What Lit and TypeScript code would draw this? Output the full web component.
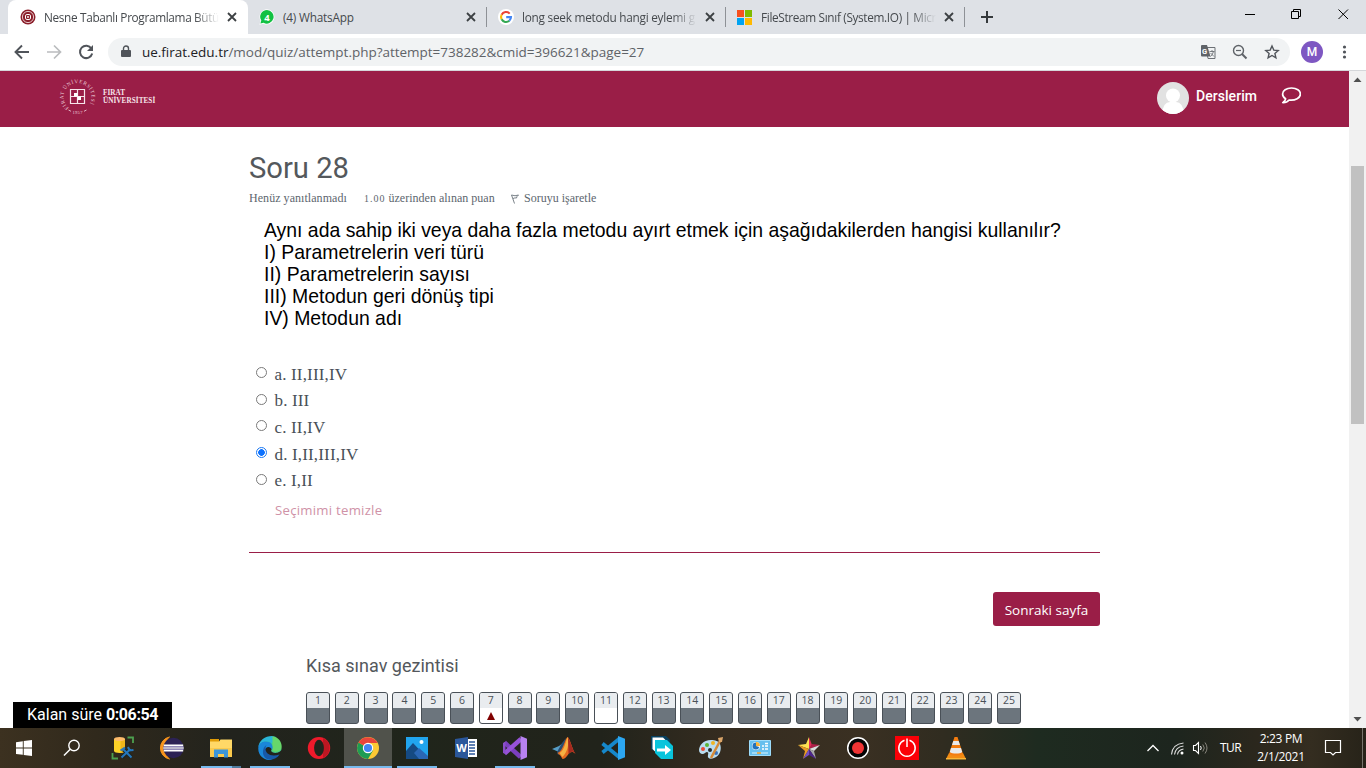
import { LitElement, html, svg, css } from "lit";
import { customElement } from "lit/decorators.js";
import { classMap } from "lit/directives/class-map.js";

const closeX = html`<svg class="x" width="10" height="10" viewBox="0 0 10 10"><path d="M1 1l8 8M9 1l-8 8" stroke="#3c4043" stroke-width="1.8" /></svg>`;

const tabIcons = {
  firat: html`<svg width="16" height="16" viewBox="0 0 16 16"><circle cx="8" cy="8" r="7.500" fill="#8b1f2b" /><circle cx="8" cy="8" r="5.600" fill="none" stroke="#e5c4c7" stroke-width="1" /><circle cx="8" cy="8" r="4" fill="none" stroke="#8b1f2b" /><rect x="5.500" y="5.500" width="5" height="5" rx="1.400" fill="none" stroke="#fff" stroke-width="1" /><path d="M8 7v2M7 8h2" stroke="#fff" stroke-width=".9" /></svg>`,
  whatsapp: html`<svg width="16" height="16" viewBox="0 0 16 16"><path d="M8 .3a7.6 7.6 0 1 1-3.6 14.4L.4 15.8l1.2-4A7.6 7.6 0 0 1 8 .3z" fill="#fff" /><path d="M8 1a6.8 6.8 0 1 1-3.4 12.8L1.4 14.6l.9-3.1A6.8 6.8 0 0 1 8 1z" fill="#12c143" /><text x="7.900" y="11.500" font-family="Open Sans, sans-serif" font-weight="700" font-size="9.500" text-anchor="middle" fill="#fff">4</text></svg>`,
  google: html`<svg width="16" height="16" viewBox="0 0 16 16"><circle cx="8" cy="8" r="8" fill="#fff" /><g fill="none" stroke-width="2.1"><path d="M11.7 4.6A5 5 0 0 0 3.6 5.7" stroke="#ea4335" /><path d="M3.6 5.7a5 5 0 0 0 0 4.6" stroke="#fbbc05" /><path d="M3.6 10.3a5 5 0 0 0 7.7 1.5" stroke="#34a853" /><path d="M11.3 11.8A5 5 0 0 0 13 8.1H8.2" stroke="#4285f4" /></g></svg>`,
  microsoft: html`<svg width="16" height="16" viewBox="0 0 16 16"><path d="M0 1h7v7h-7z" fill="#f7501e" /><path d="M8 1h7v7h-7z" fill="#7fba00" /><path d="M0 9h7v7h-7z" fill="#00a3f1" /><path d="M8 9h7v7h-7z" fill="#ffb900" /></svg>`,
};

const appIcons: Record<string, unknown> = {
  sql: svg`<path d="M16.500 1.500H22V7M1.500 17v5.500H7" fill="none" stroke="#4da04f" stroke-width="1.800"/><path d="M3 3v12c0 2.600 11 2.600 11 0V3z" fill="#fcd227"/><path d="M9.500 4H14v12l-4.500.900z" fill="#eeb51b"/><ellipse cx="8.500" cy="3" rx="5.500" ry="2" fill="#fdbb6b"/><path d="M11 21.500l9-8.500M12.500 13.500l8 8" stroke="#1f2520" stroke-width="4"/><path d="M10.500 21.500l9-8.500M12.500 13.500l8 8M9.500 14.500l4.500-3M17 11l1.500 3.500 4-.5" stroke="#2477bd" stroke-width="2" fill="none"/>`,
  eclipse: svg`<path d="M9.500 1A11.200 11.200 0 0 0 9.500 23 14 14 0 0 1 9.500 1z" fill="#f7941e" stroke="#f7941e" stroke-width="1"/><circle cx="13.500" cy="12" r="10.200" fill="#2c2255"/><path d="M3.800 9.200h19.400M3.300 12h20.400M3.800 14.800h19.400" stroke="#fff" stroke-width="1.500"/><path d="M3.500 10.600h20M3.500 13.400h20" stroke="#9188b8" stroke-width="1.200"/>`,
  explorer: svg`<path d="M1 3h9v4H1z" fill="#e09c07"/><path d="M1 5.500h9l1.500-2H23V21H1z" fill="#ffd867"/><path d="M1 12h22v9H1z" fill="#fbca4d"/><path d="M5 21.500v-8h14v8h-4V18H9v3.500z" fill="#3d96d8"/>`,
  edge: svg`<path d="M23.500 13A12 12 0 0 0 .5 9.500C3 4.500 13 5 14 11c.4 2.500-1.500 3-.5 4.600C15.500 18 23 17 23.500 13z" fill="#43c98a"/><path d="M14 0C7 0 1 4.500.4 11c3-6 10-7 13.500-3.500L18 1z" fill="#2ab6d8"/><path d="M14.500.3c6 .7 9.500 6 9.200 10.700-.2 4-5.700 6-9.200 4z" fill="#66d76a"/><path d="M.4 11C1 7 5 5.500 8 5.500c6 0 7.500 5 6 8.500-1-3-4-4-6-2-4 5 2 11 7 10.800C9 26.500-1 21 .4 11z" fill="#1a87d9"/><path d="M8.500 9C5 15 10.500 22 21.500 18.500c-3 5-10 6.500-14 3.500C3.500 19 4.500 11 8.500 9z" fill="#1759a8"/>`,
  opera: svg`<ellipse cx="12" cy="12" rx="11.200" ry="11" fill="#ef1a2b"/><path d="M16 2a11.200 11 0 0 1 0 20z" fill="#bd1722"/><ellipse cx="12" cy="12" rx="4.900" ry="8.200" fill="#22251d"/>`,
  chrome: svg`<circle cx="12" cy="12" r="11" fill="#fcc934"/><path d="M12 12L2.500 6.500A11 11 0 0 0 12 23l5-8.500z" fill="#1e9b54"/><path d="M12 12L2.500 6.500A11 11 0 0 1 21.600 7H12z" fill="#e8453c"/><circle cx="12" cy="12" r="5.200" fill="#fff"/><circle cx="12" cy="12" r="4.100" fill="#4285f4"/>`,
  photos: svg`<path d="M1 1h22v22H1z" fill="#21a5ee"/><path d="M1 15l7-8 15 16H1z" fill="#154a82"/><path d="M9 17l5-5 9 8v3H14z" fill="#2a67b5"/><circle cx="16.500" cy="6" r="2" fill="#fff"/>`,
  word: svg`<path d="M12 3h11v18H12z" fill="#fff"/><path d="M15 6h6M15 9h6M15 12h6M15 15h6M15 18h6" stroke="#2b579a" stroke-width="1.300"/><path d="M1 3l13-2v22L1 21z" fill="#2b579a"/><text x="7.500" y="16" font-family="Open Sans,sans-serif" font-size="11" font-weight="700" text-anchor="middle" fill="#fff">W</text>`,
  vs: svg`<path d="M1.500 6.500L17.500 21" stroke="#7b3fc0" stroke-width="4.500"/><path d="M1.500 17.500L18 3" stroke="#9652d8" stroke-width="4.500"/><path d="M0 7l2.500-1.500V18L0 17z" fill="#8b4fcb"/><path d="M17.500 0v24L24 21.300V2.700z" fill="#b782f1"/>`,
  matlab: svg`<path d="M0 13l7-3 4-3-4 9z" fill="#569dc6"/><path d="M5 16l5-9 4-5-4 14-4 3z" fill="#294c70"/><path d="M15.500 1c3 2 4 11 8 17-3-3-5-2-7 0-2 3-4 5-6 5-2-4-3-4-5-6 6-2 7-14 10-16z" fill="#e56b20"/><path d="M15.500 1c2 7 0 15-5 20l-3-4c5-3 6-11 8-16z" fill="#f5b243"/><path d="M16 1c3 5 4 12 7.500 17-3-4-5-2-7 0z" fill="#a42920"/>`,
  vscode: svg`<path d="M1.500 7.500L18 21M1.500 16.500L18 3" stroke="#1688cb" stroke-width="3.600"/><path d="M17 0l7 2.800v18.400L17 24z" fill="#2ca7f2"/>`,
  transfer: svg`<path d="M1 0h15l4 4v11H4L1 13z" fill="#08405f"/><path d="M2.500 1.500H13l4 4H6v11l-3.500-3.500z" fill="#fff"/><path d="M5 4h12l6 6v13H11l-6-6z" fill="#08c4dc"/><path d="M7 14h10" stroke="#fff" stroke-width="3"/><path d="M15 9l6 5-6 5z" fill="#fff"/>`,
  paint: svg`<path d="M12 4C4 4 0 10 0 14s4 5 6 3 4-1 3 2 2 5 6 3c6-2 8-9 6-14-1-3-5-4-9-4z" fill="#b9dcf0"/><circle cx="4" cy="13" r="2" fill="#e94a35"/><circle cx="8" cy="9" r="2" fill="#5cb436"/><circle cx="14" cy="7" r="2" fill="#efb424"/><circle cx="11" cy="14" r="2" fill="#252a2c"/><circle cx="17" cy="17" r="2" fill="#3972bd"/><path d="M12 22L21 5" stroke="#d58a38" stroke-width="2.500"/><path d="M20 6l-1-4 5-1-1 5z" fill="#dba66a"/>`,
  panel: svg`<path d="M1.500 4.500h21v15h-21z" fill="#66bfee" stroke="#9ddcfb"/><circle cx="8" cy="10" r="4" fill="#fff"/><path d="M8 10V6.500a3.500 3.500 0 1 0 3.300 4.500z" fill="#2272bb"/><path d="M8 10V6a4 4 0 0 1 4 4z" fill="#f6b33b"/><path d="M14 10h2M14 13h2M17 7.500h3M17 10h3M17 13h3" stroke="#fff" stroke-width="1.400"/><path d="M4 17h16" stroke="#d9f3fe"/><path d="M9 17h4" stroke="#e79e30" stroke-width="1.500"/>`,
  star: svg`<path d="M12 1l-3 7-8 1 11 4z" fill="#fee253"/><path d="M1 9l7 6-2 8 6-10z" fill="#e99b25"/><path d="M12 1l3 8-3 4z" fill="#e12d59"/><path d="M15 8l8 1-11 4z" fill="#b01e49"/><path d="M23 9l-6 6-5-2z" fill="#ddd"/><path d="M17 15l2 8-7-10z" fill="#a6a6a8"/><path d="M6 23l6-10v6z" fill="#7550c0"/><path d="M12 13l7 10-7-4z" fill="#4c258b"/>`,
  record: svg`<circle cx="12" cy="12" r="10.300" fill="#050505" stroke="#fff" stroke-width="1.500"/><circle cx="12" cy="12" r="6" fill="#ef3434"/>`,
  power: svg`<path d="M0 0h24v24H0z" fill="#fb0007"/><path d="M9.500 4.300a8.200 8.200 0 1 0 5 0M12 2.500V11" stroke="#fff" stroke-width="1.500" fill="none"/>`,
  vlc: svg`<path d="M5 17h14l3 6H2z" fill="#f28b13"/><path d="M10.500 1h3L19 18c-2 2-12 2-14 0z" fill="#f47c0f"/><path d="M9.300 5h5.400l1.300 4H8zM7 12h10l1.200 4c-2 2-10 2-12.400 0z" fill="#e9e9e9"/><path d="M2 22h20v1.500H2z" fill="#f9b536"/>`,
};

const apps = [
  ["sql", ""], ["eclipse", ""], ["explorer", "open split"], ["edge", "open"], ["opera", ""], ["chrome", "focus"],
  ["photos", "open"], ["word", ""], ["vs", "open"], ["matlab", ""], ["vscode", ""], ["transfer", ""],
  ["paint", ""], ["panel", ""], ["star", ""], ["record", ""], ["power", ""], ["vlc", ""],
];

@customElement("browser-chrome")
class BrowserChrome extends LitElement {
  static styles = css`
    :host { display: block; height: 71px; font-family: "Open Sans", sans-serif; box-sizing: border-box; border-bottom: 1px solid #d5d7da; background: #fff; }
    svg { display: block; flex: none; }
    .tabs { height: 34px; background: #dee1e6; display: flex; padding-left: 8px; box-sizing: border-box; }
    .tab { display: flex; align-items: center; box-sizing: border-box; height: 34px; width: 238px; padding: 0 10px 0 11px; }
    .active { background: #fff; border-radius: 8px 8px 0 0; width: 240px; padding: 0 11px 0 12px; }
    .title { flex: 1; min-width: 0; margin: 0 8px; white-space: nowrap; font-size: 11.8px; letter-spacing: -0.240px; color: #45494d; line-height: 20px; mask-image: linear-gradient(90deg, #000 86%, transparent); }
    .tight { letter-spacing: -0.340px; }
    .plain { mask-image: none; letter-spacing: -0.200px; }
    .sep { width: 1px; height: 20px; background: #8e9196; margin-top: 7px; }
    .plus { margin: 11px 0 0 16px; }
    .win { margin-left: auto; display: flex; gap: 36px; margin-right: 17px; padding-top: 9px; }
    .bar { height: 36px; display: flex; align-items: center; padding: 0 14px; }
    .nav { display: flex; gap: 16px; margin-right: 14px; }
    .omni { flex: none; width: 1182px; height: 28px; border-radius: 14px; background: #f1f3f4; display: flex; align-items: center; box-sizing: border-box; padding: 0 10px 0 12px; }
    .url { font-size: 13.5px; line-height: 18px; margin: 0 0 1px 10px; color: #5f6368; white-space: nowrap; letter-spacing: -0.020px; }
    .host { color: #202124; }
    .actions { margin-left: auto; display: flex; gap: 16px; }
    .me { width: 22px; height: 22px; border-radius: 50%; background: #7e57c2; color: #fff; display: grid; place-items: center; font: 500 12px Roboto, sans-serif; margin: 0 17px 0 11px; flex: none; }
  `;
  render() {
    return html`
      <div class="tabs">
        <div class="tab active">${tabIcons.firat}<span class="title tight">Nesne Tabanlı Programlama Bütü</span>${closeX}</div>
        <div class="tab">${tabIcons.whatsapp}<span class="title plain">(4) WhatsApp</span>${closeX}</div>
        <div class="sep"></div>
        <div class="tab">${tabIcons.google}<span class="title">long seek metodu hangi eylemi g</span>${closeX}</div>
        <div class="sep"></div>
        <div class="tab">${tabIcons.microsoft}<span class="title tight">FileStream Sınıf (System.IO) | Micr</span>${closeX}</div>
        <div class="sep"></div>
        <svg class="plus" width="12" height="12" viewBox="0 0 12 12"><path d="M6 0v12M0 6h12" stroke="#35393c" stroke-width="2" /></svg>
        <div class="win">
          <svg width="10" height="10"><path d="M0 5.500h10" stroke="#000" /></svg>
          <svg width="11" height="11"><path d="M.5 2.500h7v7h-7zM2.500 2.500v-2h7v7h-2" fill="none" stroke="#000" /></svg>
          <svg width="11" height="11"><path d="M.5.5l9.500 9.500M10 .5L.5 10" stroke="#000" /></svg>
        </div>
      </div>
      <div class="bar">
        <div class="nav">
          <svg width="16" height="16" viewBox="0 0 16 16"><path d="M15 8H2M8 1.500L1.500 8 8 14.500" fill="none" stroke="#50545a" stroke-width="1.900" /></svg>
          <svg width="16" height="16" viewBox="0 0 16 16"><path d="M1 8h13M8 1.500L14.500 8 8 14.500" fill="none" stroke="#babcbe" stroke-width="1.700" /></svg>
          <svg width="16" height="16" viewBox="0 0 16 16"><path d="M13.400 4.500A6.200 6.200 0 1 0 14.200 9.500" fill="none" stroke="#50545a" stroke-width="2" /><path d="M15 1v6H9z" fill="#50545a" /></svg>
        </div>
        <div class="omni">
          <svg width="12" height="14" viewBox="0 0 12 14"><path d="M2 5h8q1 0 1 1v5q0 1-1 1H2q-1 0-1-1V6q0-1 1-1z" fill="#50545a" /><path d="M3.500 6V3.500a2.500 2.500 0 0 1 5 0V6" fill="none" stroke="#50545a" stroke-width="1.400" /></svg>
          <span class="url"><span class="host">ue.firat.edu.tr</span>/mod/quiz/attempt.php?attempt=738282&amp;cmid=396621&amp;page=27</span>
          <div class="actions">
            <svg width="16" height="16" viewBox="0 0 16 16"><path d="M6 3.500h9v11H8z" fill="#f1f3f4" stroke="#6c7075" /><path d="M2 1h5l3.500 11.500H2q-1 0-1-1V2q0-1 1-1z" fill="#5f6368" /><text x="2" y="9.500" font-family="Roboto,sans-serif" font-size="7.500" font-weight="700" fill="#fff">G</text><path d="M9.500 7.500h5M12 6v1.500M13.500 7.500q-1 3.500-3 5M10.500 9l3.500 3.500" stroke="#5f6368" stroke-width=".8" fill="none" /></svg>
            <svg width="16" height="16" viewBox="0 0 16 16"><circle cx="6.500" cy="6.500" r="5" fill="none" stroke="#5f6368" stroke-width="1.400" /><path d="M10 10l4.500 4.500" stroke="#5f6368" stroke-width="1.900" /><path d="M4 6.500h5" stroke="#5f6368" stroke-width="1.200" /></svg>
            <svg width="16" height="16" viewBox="0 0 16 16"><path d="M8 2l1.800 4.100 4.400.4-3.300 2.900 1 4.400L8 11.500l-3.900 2.300 1-4.400-3.300-2.900 4.400-.4z" fill="none" stroke="#50545a" stroke-width="1.400" /></svg>
          </div>
        </div>
        <span class="me">M</span>
        <svg width="12" height="16" viewBox="0 0 12 16"><g fill="#50545a"><circle cx="4.500" cy="3" r="1.600" /><circle cx="4.500" cy="8" r="1.600" /><circle cx="4.500" cy="13" r="1.600" /></g></svg>
      </div>`;
  }
}

@customElement("quiz-page")
class QuizPage extends LitElement {
  static styles = css`
    :host { display: flex; height: 657px; overflow: hidden; background: #fff; }
    svg { display: block; flex: none; }
    .page { width: 1349px; flex: none; }
    .head { height: 56px; background: #9a1e47; display: flex; color: #fff; box-sizing: border-box; padding: 0 47px 0 59px; }
    .brand { font: 700 7.200px/8px "Liberation Serif", serif; letter-spacing: 0.060px; margin: 18px 0 0 7px; color: #f6e4ea; }
    .brand > div { height: 8px; white-space: nowrap; }
    .seal { margin-top: 7px; overflow: visible; }
    .user { margin-left: auto; display: flex; align-items: flex-start; }
    .avatar { margin-top: 11px; }
    .courses { font: 500 14px/20px Roboto, sans-serif; margin: 15px 23px 0 7px; width: 62px; white-space: nowrap; letter-spacing: 0.050px; }
    .bubble { margin: 15px 1px 0 0; }
    .main { width: 851px; margin-left: 249px; }
    h1 { font: 400 29.200px/36px Roboto, sans-serif; margin: 23px 0 0; color: #54585c; height: 36px; }
    .meta { display: flex; height: 16px; margin-top: 4px; font: 12px/16px "Liberation Serif", serif; color: #5d666e; white-space: nowrap; }
    .state { width: 115px; letter-spacing: 0.050px; }
    .grade { width: 147px; letter-spacing: 0.010px; }
    .old { font-size: 10px; letter-spacing: 1px; }
    .flag { margin: 4px 5px 0 0; }
    .q { font: 19.420px/22.200px "Liberation Sans", sans-serif; color: #000; margin: 12.600px 0 0.400px 15px; white-space: nowrap; height: 111px; }
    .answers { margin: 31px 0 0 7px; }
    .row { display: flex; height: 26.700px; align-items: flex-start; font: 17px/26.700px "Liberation Serif", serif; color: #495057; }
    .label { margin-top: 1px; letter-spacing: 0.160px; }
    .radio { box-sizing: border-box; width: 11px; height: 11px; border-radius: 50%; border: 1px solid #7a7a7a; margin: 6.400px 7.500px 0 0; flex: none; }
    .on { border-color: #1b78f2; background: radial-gradient(circle, #0d72ff 0 3px, #fff 3.600px); }
    .clear { font: 13.200px/20px "Open Sans", sans-serif; letter-spacing: 0.250px; color: #cf92a7; margin: 6px 0 0 19px; }
    .rule { height: 1px; background: #9a1e47; margin-top: 31.500px; }
    .next { display: grid; place-items: center; width: 107px; height: 34px; border-radius: 3px; background: #9a1e47; color: #fff; font: 13.500px/20px "Open Sans", sans-serif; margin: 39px 0 0 auto; white-space: nowrap; padding-top: 2px; box-sizing: border-box; }
    h2 { font: 400 18px/24px Roboto, sans-serif; color: #54585c; margin: 28px 0 0 57px; }
    .nums { display: flex; gap: 4.800px; margin: 14px 0 0 57px; }
    .num { flex: none; width: 24px; height: 32px; box-sizing: border-box; border: 1px solid #495057; border-radius: 3px; background: #6c757d; overflow: hidden; font: 10.500px/15px "Open Sans", sans-serif; color: #495057; text-align: center; }
    .n { background: #e9ecef; height: 15px; }
    .blank { background: #fff; }
    .tri { margin: 4px auto 0; }
    .scroll { width: 17px; background: #f1f1f1; display: flex; flex-direction: column; align-items: center; }
    .thumb { width: 13px; height: 258px; background: #c1c1c1; margin-top: 78px; }
    .down { margin-top: auto; }
  `;
  render() {
    const choices = ["a. II,III,IV", "b. III", "c. II,IV", "d. I,II,III,IV", "e. I,II"];
    return html`
      <div class="page">
        <div class="head">
          <svg class="seal" width="37" height="37" viewBox="0 0 37 37">
            <defs><path id="ring" d="M9.800 30A14 14 0 1 1 27.200 30" /></defs>
            <g fill="#f0d5df" font-family="Liberation Serif, serif" font-size="5.200"><text textLength="63"><textPath href="#ring">FIRAT ÜNİVERSİTESİ</textPath></text><text x="13.500" y="35.500" font-size="4.500" letter-spacing=".3">1957</text></g>
            <path d="M9.500 32l2.500 1.300M27.500 32L25 33.300" stroke="#f0d5df" stroke-width=".8" />
            <path d="M11.500 11.500h14v14h-14zM18.500 11.500v14M11.500 18.500h14" fill="none" stroke="#f6e4ea" stroke-width="1.200" /><path d="M15 15h3.500v3.500H15zM18.500 18.500H22V22h-3.500z" fill="#fff" />
          </svg>
          <div class="brand"><div>FIRAT</div><div>ÜNİVERSİTESİ</div></div>
          <div class="user">
            <svg class="avatar" width="32" height="32" viewBox="0 0 32 32"><defs><clipPath id="disc"><circle cx="16" cy="16" r="16" /></clipPath></defs><g clip-path="url(#disc)"><path d="M0 0h32v32H0z" fill="#e2e2e2" /><circle cx="16" cy="13.500" r="7" fill="#fff" /><path d="M5 32q1-12 8-12h6q7 0 8 12z" fill="#fff" /></g></svg>
            <span class="courses">Derslerim</span>
            <svg class="bubble" width="20" height="19" viewBox="0 0 20 19"><path d="M10.500 2C5.300 2 1.600 4.600 1.600 8c0 2 1.200 3.700 3 4.800-.2 1.500-1 2.500-2.800 3.800 2.700.1 4.900-.9 6.300-2.600 6.400.7 11.300-2.200 11.300-6 0-3.400-3.700-6-8.900-6z" fill="none" stroke="#fff" stroke-width="1.700" stroke-linejoin="round" /></svg>
          </div>
        </div>
        <div class="main">
          <h1>Soru 28</h1>
          <div class="meta"><span class="state">Henüz yanıtlanmadı</span><span class="grade"><span class="old">1.00</span> üzerinden alınan puan</span><svg class="flag" width="8" height="10" viewBox="0 0 8 10"><path d="M.5 1l3 8.500M.5 1Q4 2.500 7.500 1 5.500 2.500 5.500 4 4 3.500 2 4.500" fill="none" stroke="#6b747c" stroke-width=".9" /></svg><span>Soruyu işaretle</span></div>
          <div class="q">Aynı ada sahip iki veya daha fazla metodu ayırt etmek için aşağıdakilerden hangisi kullanılır?<br />I) Parametrelerin veri türü<br />II) Parametrelerin sayısı<br />III) Metodun geri dönüş tipi<br />IV) Metodun adı</div>
          <div class="answers">
            ${choices.map((c, i) => html`<div class="row"><span class=${classMap({ radio: true, on: i === 3 })}></span><span class="label">${c}</span></div>`)}
            <div class="clear">Seçimimi temizle</div>
          </div>
          <div class="rule"></div>
          <div class="next">Sonraki sayfa</div>
          <h2>Kısa sınav gezintisi</h2>
          <div class="nums">${Array.from({ length: 25 }, (_, i) => i + 1).map((n) => html`<div class=${classMap({ num: true, blank: n === 7 || n === 11 })}><div class="n">${n}</div>${n === 7 ? html`<svg class="tri" width="8" height="8"><path d="M4 0l4 8H0z" fill="#800000" /></svg>` : ""}</div>`)}</div>
        </div>
      </div>
      <div class="scroll">
        <svg width="17" height="17"><path d="M8.500 6.500l4 4.500h-8z" fill="#505050" /></svg>
        <div class="thumb"></div>
        <svg class="down" width="17" height="17"><path d="M4.500 6h8l-4 4.500z" fill="#505050" /></svg>
      </div>`;
  }
}

@customElement("task-bar")
class TaskBar extends LitElement {
  static styles = css`
    :host { display: flex; height: 40px; background: linear-gradient(90deg, #3c3120 0, #30291c 7%, #22231d 17%, #20251b 30%, #21231b 44%, #352c20 53%, #3a3022 63%, #302c20 69%, #1e2b20 76%, #1d251e 86%, #2b271d 92%, #342d20 96%, #272319 100%); color: #fff; font: 12px/16px "Open Sans", sans-serif; overflow: hidden; }
    svg { display: block; flex: none; }
    .sys { width: 48px; display: grid; place-items: center; }
    .apps { display: flex; gap: 1px; margin-left: 3px; }
    .app { width: 48px; height: 40px; box-sizing: border-box; padding: 8px 12px 0; display: flex; flex-direction: column; }
    .focus { background: #50524b; padding: 8px 0 0; align-items: center; }
    .line { height: 2px; margin: 6px -8px 0; background: #76b9ed; }
    .focus .line { margin: 6px 0 0; align-self: stretch; }
    .split .line { background: linear-gradient(90deg, #76b9ed 0 31px, #4f7b9d 31px); }
    .tray { display: flex; margin-left: auto; align-items: center; }
    .lang { margin-left: 11px; width: 36px; letter-spacing: -0.6px; }
    .clock { width: 50px; text-align: center; line-height: 18px; letter-spacing: -0.320px; white-space: nowrap; height: 36px; margin-bottom: 1px; }
    .note { margin: 0 20px 0 18px; }
    .edge { width: 1px; height: 40px; background: #77746c; margin-right: 3px; }
    .wifi { margin-left: 7px; }
    .sound { margin-left: 5px; }
  `;
  render() {
    return html`
      <div class="sys"><svg width="16" height="16" viewBox="0 0 16 16"><path d="M0 2.200L6.800 1.200V7.600H0zM7.700 1.100L16 0v7.600H7.700zM0 8.500h6.800v6.300L0 13.900zM7.700 8.500H16V16l-8.300-1.100z" fill="#fff" /></svg></div>
      <div class="sys"><svg width="18" height="18" viewBox="0 0 18 18"><circle cx="11" cy="6.500" r="5.200" fill="none" stroke="#fff" stroke-width="1.400" /><path d="M7.200 10.200L1 16.500" stroke="#fff" stroke-width="1.500" /></svg></div>
      <div class="apps">${apps.map(([id, st]) => html`<div class="app ${st}"><svg width="24" height="24" viewBox="0 0 24 24">${appIcons[id]}</svg>${st ? html`<div class="line"></div>` : ""}</div>`)}</div>
      <div class="tray">
        <svg width="12" height="8" viewBox="0 0 12 8"><path d="M.5 7L6 1.500 11.500 7" fill="none" stroke="#fff" stroke-width="1.300" /></svg>
        <svg class="wifi" width="20" height="16" viewBox="0 0 20 16"><g fill="none" stroke="#ddd" stroke-width="1.100"><path d="M5.500 14.500Q6.500 4 17.500 3" /><path d="M8.500 14.500Q9.500 7 17.500 6" /><path d="M11.500 14.500Q12 10 17.500 9" /></g><circle cx="16" cy="13" r="1.500" fill="#fff" /></svg>
        <svg class="sound" width="18" height="16" viewBox="0 0 18 16"><path d="M2.500 5.500h2l3-3v11l-3-3h-2z" fill="none" stroke="#fff" stroke-width="1.100" /><path d="M9.500 6q1.500 2 0 4" fill="none" stroke="#fff" /><path d="M11.800 4.500q3 3.500 0 7M14 2.500q4 5.500 0 11" fill="none" stroke="#89877e" /></svg>
        <span class="lang">TUR</span>
        <div class="clock">2:23 PM<br />2/1/2021</div>
        <svg class="note" width="18" height="18" viewBox="0 0 18 18"><path d="M1.500 1.500h15v12h-5L9 16l-2.500-2.500h-5z" fill="none" stroke="#fff" stroke-width="1.200" /></svg>
        <div class="edge"></div>
      </div>`;
  }
}

@customElement("app-root")
class AppRoot extends LitElement {
  static styles = css`
    :host { display: block; position: relative; width: 1366px; height: 768px; overflow: hidden; }
    .timer { position: absolute; left: 13px; top: 702px; width: 159px; height: 26px; box-sizing: border-box; padding-left: 14px; background: #000; color: #fff; font: 16px/25px Roboto, sans-serif; white-space: nowrap; }
    .left { font-weight: 700; letter-spacing: -0.4px; }
  `;
  render() {
    return html`<browser-chrome></browser-chrome><quiz-page></quiz-page><task-bar></task-bar><div class="timer">Kalan süre <span class="left">0:06:54</span></div>`;
  }
}
